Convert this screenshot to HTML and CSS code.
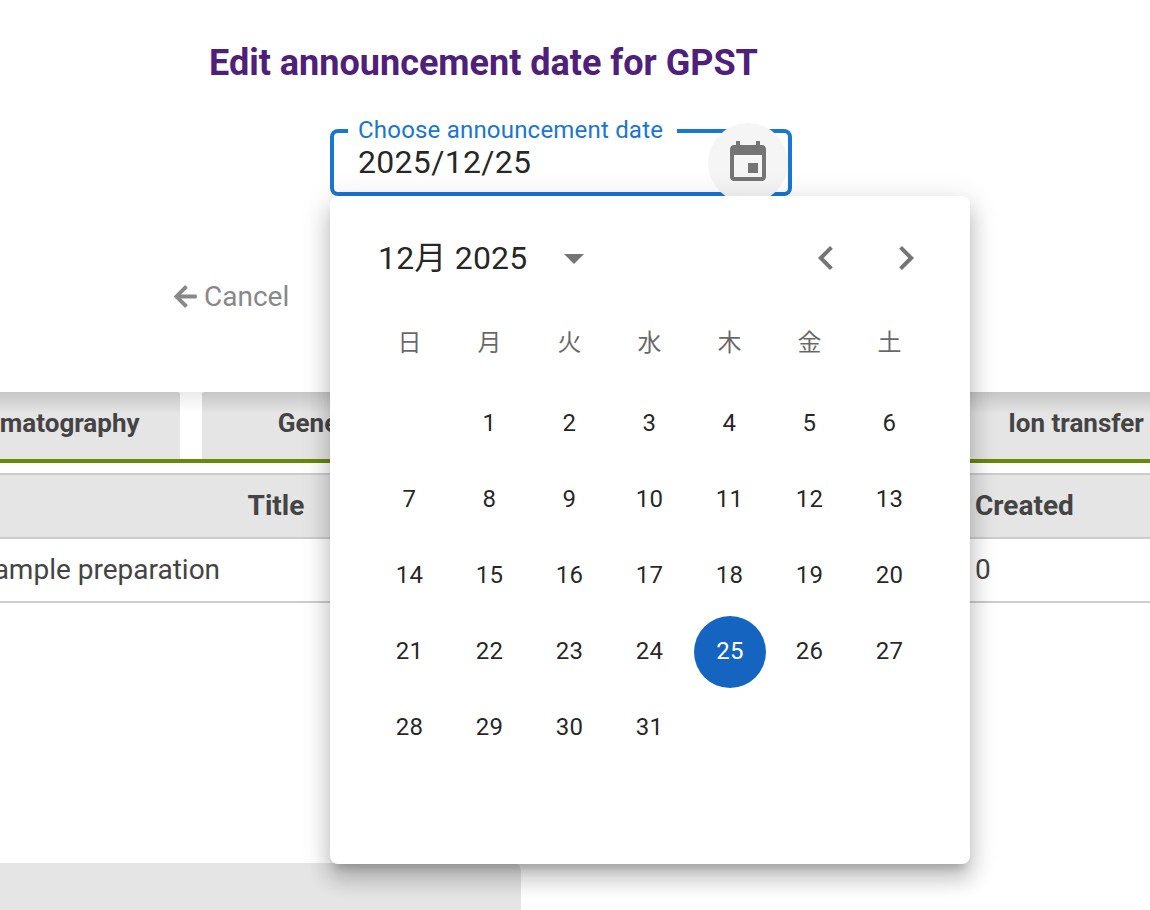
FILE: index.html
```html
<!DOCTYPE html>
<html lang="en">
<head>
    <meta charset="UTF-8">
    <meta name="viewport" content="width=device-width, initial-scale=1.0">
    <title>Edit announcement date</title>
    <link rel="stylesheet" href="styles.css">
</head>
<body>
<div class="page">
    <h1 class="page-title">Edit announcement date for GPST</h1>

    <div class="date-field">
        <span class="date-label">Choose announcement date</span>
        <span class="date-value">2025/12/25</span>
        <button class="date-btn">
            <svg class="icon-48" viewBox="0 0 24 24"><path d="M17 12h-5v5h5v-5zM16 1v2H8V1H6v2H5c-1.11 0-1.99.9-1.99 2L3 19c0 1.1.89 2 2 2h14c1.1 0 2-.9 2-2V5c0-1.1-.9-2-2-2h-1V1h-2zm3 18H5V8h14v11z"/></svg>
        </button>
    </div>

    <a class="cancel" href="#">
        <svg class="cancel-arrow" viewBox="0 30 448 452"><path d="M257.5 445.1l-22.2 22.2c-9.4 9.4-24.6 9.4-33.9 0L7 273c-9.4-9.4-9.4-24.6 0-33.9L201.4 44.7c9.4-9.4 24.6-9.4 33.9 0l22.2 22.2c9.5 9.5 9.3 25-.4 34.3L136.6 216H424c13.3 0 24 10.7 24 24v32c0 13.3-10.7 24-24 24H136.6l120.5 114.8c9.8 9.3 10 24.8.4 34.3z"/></svg>
        Cancel
    </a>

    <div class="tabs">
        <div class="tab tab-first">Chromatography</div>
        <div class="tab tab-second">General</div>
        <div class="tab tab-third">Detection</div>
        <div class="tab tab-last">Ion transfer</div>
    </div>

    <div class="table-row table-head">
        <div class="cell-title">Title</div>
        <div class="cell-created">Created</div>
    </div>
    <div class="table-row table-body">
        <div class="cell-title">Sample preparation</div>
        <div class="cell-created">0</div>
    </div>

    <div class="footer-bar"></div>

    <div class="calendar">
        <div class="cal-head">
            <span class="cal-month">12月 2025</span>
            <svg class="icon-48 cal-caret" viewBox="0 0 24 24"><path d="M7 10l5 5 5-5z"/></svg>
            <svg class="icon-48 cal-prev" viewBox="0 0 24 24"><path d="M15.41 7.41 14 6l-6 6 6 6 1.41-1.41L10.83 12z"/></svg>
            <svg class="icon-48 cal-next" viewBox="0 0 24 24"><path d="M10 6 8.59 7.41 13.17 12l-4.58 4.59L10 18l6-6z"/></svg>
        </div>
        <div class="cal-week">
            <span>日</span><span>月</span><span>火</span><span>水</span><span>木</span><span>金</span><span>土</span>
        </div>
        <div class="cal-days">
            <span></span><span>1</span><span>2</span><span>3</span><span>4</span><span>5</span><span>6</span>
            <span>7</span><span>8</span><span>9</span><span>10</span><span>11</span><span>12</span><span>13</span>
            <span>14</span><span>15</span><span>16</span><span>17</span><span>18</span><span>19</span><span>20</span>
            <span>21</span><span>22</span><span>23</span><span>24</span><span class="selected">25</span><span>26</span><span>27</span>
            <span>28</span><span>29</span><span>30</span><span>31</span>
        </div>
    </div>
</div>
</body>
</html>
```

FILE: styles.css
```css
html, body {
    margin: 0;
    padding: 0;
    overflow: hidden;
}
body {
    font-family: Roboto, "Noto Sans CJK JP", sans-serif;
    background: #fff;
}
.page {
    position: relative;
    width: 1150px;
    height: 910px;
    overflow: hidden;
}
.icon-48 {
    width: 48px;
    height: 48px;
    fill: #757575;
    flex: none;
}

.page-title {
    margin: 0;
    padding: 43px 0 0 209px;
    height: 129px;
    box-sizing: border-box;
    font-size: 36px;
    line-height: 40px;
    font-weight: 700;
    color: #4f2079;
}

.date-field {
    position: relative;
    margin-left: 330px;
    width: 462px;
    height: 67px;
    box-sizing: border-box;
    border: 4px solid #1976d2;
    border-radius: 8px;
    display: flex;
    align-items: center;
    padding-left: 24px;
}
.date-label {
    position: absolute;
    top: -17px;
    left: 14px;
    padding: 0 14px 0 10px;
    background: #fff;
    font-size: 24px;
    line-height: 28px;
    letter-spacing: 0.2px;
    color: #1976d2;
}
.date-value {
    font-size: 32px;
    line-height: 40px;
    letter-spacing: 0.3px;
    color: rgba(0, 0, 0, 0.87);
    margin-top: -2px;
}
.date-btn {
    position: absolute;
    top: -10px;
    right: 0;
    width: 80px;
    height: 80px;
    border: none;
    padding: 0;
    border-radius: 50%;
    background: #f5f5f5;
    display: flex;
    align-items: center;
    justify-content: center;
}

.cancel {
    display: flex;
    align-items: center;
    gap: 7px;
    margin: 82px 0 0 174px;
    height: 36px;
    font-size: 28px;
    color: #888;
    text-decoration: none;
}
.cancel-arrow {
    width: 23px;
    height: 23px;
    fill: #888;
}

.tabs {
    display: flex;
    gap: 22px;
    margin: 78px 0 0 -96px;
    width: 1400px;
    height: 71px;
    border-bottom: 4px solid #668a0a;
    box-sizing: border-box;
    background: linear-gradient(#ebebeb, #fff 20px);
}
.tab {
    flex: none;
    height: 67px;
    background: linear-gradient(#c6c6c6, #e5e5e5 22px);
    border-radius: 2px 2px 0 0;
    font-size: 26px;
    font-weight: 700;
    line-height: 62px;
    text-align: center;
    color: #444;
}
.tab-first { width: 276px; }
.tab-second { width: 242px; }
.tab-third { width: 472px; }
.tab-last { width: 232px; }

.table-row {
    display: flex;
    box-sizing: border-box;
    margin-left: -35px;
    width: 1185px;
    font-size: 28px;
    color: #444;
}
.table-head {
    margin-top: 10px;
    height: 66px;
    line-height: 62px;
    background: #e5e5e5;
    border-top: 2px solid #ccc;
    border-bottom: 2px solid #ccc;
    font-weight: 700;
}
.table-body {
    height: 64px;
    line-height: 62px;
    border-bottom: 2px solid #ccc;
}
.cell-title {
    width: 622px;
    box-sizing: border-box;
    padding-left: 12px;
}
.table-head .cell-title {
    text-align: center;
    padding-left: 0;
}
.cell-created {
    margin-left: 373px;
    padding-left: 15px;
}

.footer-bar {
    margin-top: 260px;
    width: 521px;
    height: 50px;
    background: #e5e5e5;
    border-top-right-radius: 8px;
}

.calendar {
    position: absolute;
    top: 196px;
    left: 330px;
    width: 640px;
    height: 668px;
    background: #fff;
    border-radius: 8px;
    box-shadow: 0 10px 10px -6px rgba(0, 0, 0, 0.2), 0 16px 20px 2px rgba(0, 0, 0, 0.14), 0 6px 28px 4px rgba(0, 0, 0, 0.12);
}
.cal-head {
    display: flex;
    align-items: center;
    height: 48px;
    padding-top: 38px;
    padding-left: 48px;
}
.cal-month {
    width: 172px;
    font-size: 32px;
    line-height: 48px;
    letter-spacing: 0.2px;
    color: rgba(0, 0, 0, 0.87);
}
.cal-caret { margin-right: 204px; }
.cal-prev { margin-right: 32px; }
.cal-week, .cal-days {
    display: grid;
    grid-template-columns: repeat(7, 80px);
    padding-left: 39.5px;
    justify-items: center;
}
.cal-week {
    margin-top: 38px;
    height: 40px;
    align-items: center;
    font-size: 24px;
    color: rgba(0, 0, 0, 0.6);
}
.cal-days {
    margin-top: 28px;
    grid-auto-rows: 72px;
    row-gap: 4px;
    font-size: 24px;
    letter-spacing: 0.3px;
    color: rgba(0, 0, 0, 0.87);
}
.cal-days span {
    width: 72px;
    height: 72px;
    line-height: 70px;
    text-align: center;
    border-radius: 50%;
}
.cal-days .selected {
    background: #1565c0;
    color: #fff;
    margin-left: 1px;
}
```
